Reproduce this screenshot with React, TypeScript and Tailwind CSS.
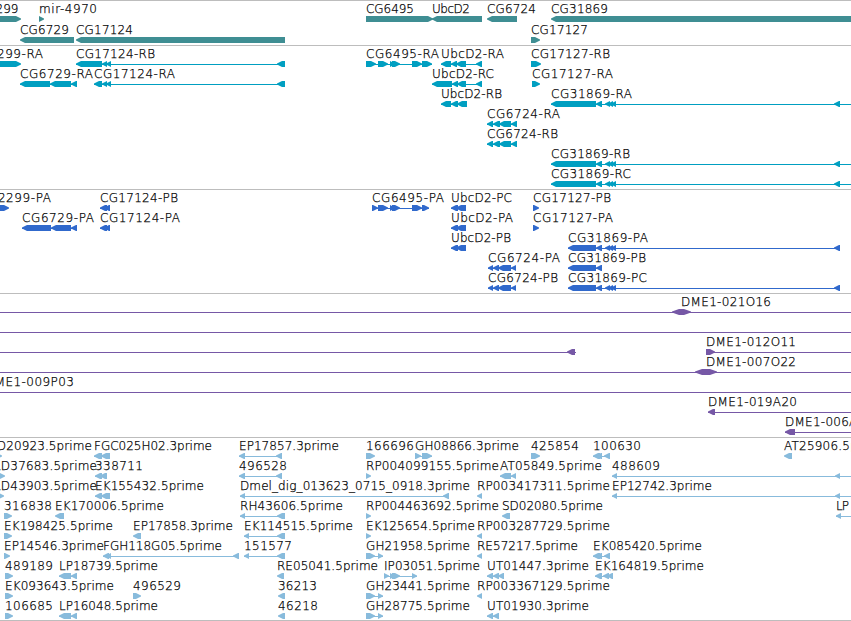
type Strand = '+' | '-' | '=';

// label, x of the label, x where the label ends, strand, exons, optional backbone range
type Feature = [string, number, number, Strand, number[][], number[]?];

interface Track {
  name: string;
  color: string;
  rowClass: string;
  padClass: string;
  rows: Feature[][];
}

const VIEW_END = 860;

const RB_17124 = [[102, 107], [106, 111], [277, 285]];
const TAIL_31869 = [[596, 602], [605, 610], [608, 613], [611, 616], [834, 840]];
const R_31869 = [[551, 596], ...TAIL_31869];
const P_31869 = [[568, 596], ...TAIL_31869];
const R_6724 = [[487, 493], [493, 500], [499, 511], [511, 517]];
const P_6724 = [[488, 493], [493, 499], [498, 511], [511, 516]];

const tracks: Track[] = [
  {
    name: 'Genes',
    color: '#3f8e93',
    rowClass: 'h-[21px]',
    padClass: 'pb-0.5',
    rows: [
      [
        ['CG2299', -30, 18.5, '+', [[-30, 21]]],
        ['mir-4970', 39, 97, '+', [[39, 44]]],
        ['CG6495', 366, 414, '+', [[366, 433]]],
        ['UbcD2', 432, 470, '-', [[432, 482]]],
        ['CG6724', 487, 536, '-', [[487, 517]]],
        ['CG31869', 551, 608, '-', [[551, VIEW_END]]],
      ],
      [
        ['CG6729', 20, 69, '-', [[20, 74]]],
        ['CG17124', 76, 133, '-', [[76, 285]]],
        ['CG17127', 531, 588, '+', [[531, 540]]],
      ],
    ],
  },
  {
    name: 'Transcripts',
    color: '#009fc1',
    rowClass: 'h-5',
    padClass: 'pb-[3px]',
    rows: [
      [
        ['CG2299-RA', -30, 43, '+', [[-30, 21]]],
        ['CG17124-RB', 76, 155, '-', [[76, 102], ...RB_17124]],
        ['CG6495-RA', 366, 439, '+', [[366, 376], [378, 388], [390, 395], [392, 400], [412, 422], [422, 432]]],
        ['UbcD2-RA', 441, 504, '-', [[441, 451], [451, 457], [456, 466], [476, 482]]],
        ['CG17127-RB', 531, 610, '+', [[531, 541]]],
      ],
      [
        ['CG6729-RA', 20, 93, '-', [[20, 50], [50, 71], [71, 77]]],
        ['CG17124-RA', 94, 175, '-', [[94, 102], ...RB_17124]],
        ['UbcD2-RC', 432, 494, '-', [[432, 452], [452, 458], [457, 466], [476, 482]]],
        ['CG17127-RA', 532, 613, '+', [[532, 540]]],
      ],
      [
        ['UbcD2-RB', 441, 502, '-', [[441, 451], [451, 458], [457, 467]]],
        ['CG31869-RA', 551, 632, '-', R_31869, [551, VIEW_END]],
      ],
      [['CG6724-RA', 487, 560, '-', R_6724]],
      [['CG6724-RB', 487, 558, '-', R_6724]],
      [['CG31869-RB', 551, 630, '-', R_31869, [551, VIEW_END]]],
      [['CG31869-RC', 551, 631, '-', R_31869, [551, VIEW_END]]],
    ],
  },
  {
    name: 'Proteins',
    color: '#3069cc',
    rowClass: 'h-5',
    padClass: 'pb-[3px]',
    rows: [
      [
        ['CG2299-PA', -21, 51, '+', [[-21, 9]]],
        ['CG17124-PB', 100, 178, '-', [[100, 107], [104, 110]]],
        ['CG6495-PA', 372, 444, '+', [[372, 378], [378, 388], [390, 395], [392, 400], [412, 422], [422, 429]]],
        ['UbcD2-PC', 451, 512, '-', [[451, 458], [456, 466]]],
        ['CG17127-PB', 533, 611, '+', [[533, 539]]],
      ],
      [
        ['CG6729-PA', 22, 94, '-', [[22, 51], [51, 71], [71, 77]]],
        ['CG17124-PA', 100, 180, '-', [[100, 107], [104, 110]]],
        ['UbcD2-PA', 451, 513, '-', [[451, 458], [456, 466]]],
        ['CG17127-PA', 533, 613, '+', [[533, 539]]],
      ],
      [
        ['UbcD2-PB', 451, 511, '-', [[451, 458], [456, 466]]],
        ['CG31869-PA', 568, 648, '-', P_31869],
      ],
      [
        ['CG6724-PA', 488, 560, '-', P_6724],
        ['CG31869-PB', 568, 646, '-', [[568, 596], [596, 602]]],
      ],
      [
        ['CG6724-PB', 488, 558, '-', P_6724],
        ['CG31869-PC', 568, 647, '-', P_31869],
      ],
    ],
  },
  {
    name: 'BAC clones',
    color: '#7658a6',
    rowClass: 'h-5',
    padClass: 'pb-[3px]',
    rows: [
      [['DME1-021O16', 681, 771, '=', [[672, 691]], [-5, VIEW_END]]],
      [['', 0, 0, '+', [], [-5, VIEW_END]]],
      [
        ['', 0, 0, '-', [[567, 575]], [-5, 576]],
        ['DME1-012O11', 706, 796, '+', [[706, 715]], [706, VIEW_END]],
      ],
      [['DME1-007O22', 706, 796, '=', [[695, 717]], [-5, VIEW_END]]],
      [['DME1-009P03', -15, 74, '+', [], [-5, VIEW_END]]],
      [['DME1-019A20', 708, 797, '-', [[708, 715]], [708, VIEW_END]]],
      [['DME1-006A14', 785, 873, '-', [[785, 795]], [785, VIEW_END]]],
    ],
  },
  {
    name: 'ESTs',
    color: '#88bbdc',
    rowClass: 'h-5',
    padClass: 'pb-0.5',
    rows: [
      [
        ['LD20923.5prime', -10, 92, '+', [[-6, 2]]],
        ['FGC025H02.3prime', 94, 212, '-', [[94, 102], [101, 110]]],
        ['EP17857.3prime', 239, 339, '-', [[239, 245], [276, 282]]],
        ['166696', 366, 414, '+', [[366, 375]]],
        ['GH08866.3prime', 415, 519, '+', [[415, 421], [422, 432]]],
        ['425854', 531, 579, '+', [[531, 540]]],
        ['100630', 593, 641, '-', [[593, 600], [596, 602], [604, 610]]],
        ['AT25906.5prime', 784, 886, '-', [[784, 792]]],
      ],
      [
        ['LD37683.5prime', -6, 97, '+', [[-6, 5]]],
        ['338711', 95, 143, '-', [[95, 102], [100, 107]]],
        ['496528', 239, 287, '-', [[239, 245], [276, 282]]],
        ['RP004099155.5prime', 366, 499, '+', [[366, 371]]],
        ['AT05849.5prime', 500, 602, '-', [[500, 511], [511, 516]]],
        ['488609', 612, 660, '-', [[612, 617], [835, 840]], [612, VIEW_END]],
      ],
      [
        ['LD43903.5prime', -6, 97, '+', [[-6, 4]]],
        ['EK155432.5prime', 95, 204, '-', [[95, 102], [101, 110]]],
        ['Dmel_dig_013623_0715_0918.3prime', 240, 470, '-', [[240, 245], [443, 449]]],
        ['RP003417311.5prime', 477, 610, '-', [[477, 482]]],
        ['EP12742.3prime', 612, 712, '-', [[612, 617], [835, 840]], [612, VIEW_END]],
      ],
      [
        ['316838', 4, 52, '+', [[4, 12]]],
        ['EK170006.5prime', 55, 164, '-', [[55, 64]]],
        ['RH43606.5prime', 240, 343, '-', [[240, 245], [277, 285]]],
        ['RP004463692.5prime', 366, 499, '+', [[366, 371]]],
        ['SD02080.5prime', 502, 603, '-', [[502, 510]]],
        ['LP', 836, 849, '-', [[836, 841]], [836, VIEW_END]],
      ],
      [
        ['EK198425.5prime', 4, 113, '+', [[4, 12]]],
        ['EP17858.3prime', 133, 233, '-', [[133, 141]]],
        ['EK114515.5prime', 244, 353, '-', [[244, 249], [277, 285]]],
        ['EK125654.5prime', 366, 475, '+', [[366, 371]]],
        ['RP003287729.5prime', 477, 610, '-', [[477, 482]]],
      ],
      [
        ['EP14546.3prime', 4, 104, '+', [[4, 10]]],
        ['FGH118G05.5prime', 103, 222, '-', [[103, 109], [106, 111], [233, 239]]],
        ['151577', 244, 292, '-', [[244, 249], [277, 285]]],
        ['GH21958.5prime', 366, 470, '+', [[366, 375], [378, 383]]],
        ['RE57217.5prime', 477, 578, '-', [[477, 482]]],
        ['EK085420.5prime', 593, 702, '-', [[593, 600], [596, 602], [604, 610]]],
      ],
      [
        ['489189', 5, 53, '+', [[5, 13]]],
        ['LP18739.5prime', 59, 158, '-', [[59, 71], [71, 77]]],
        ['RE05041.5prime', 277, 378, '-', [[277, 284]]],
        ['IP03051.5prime', 384, 480, '+', [[384, 389], [390, 395], [392, 400], [412, 417]]],
        ['UT01447.3prime', 487, 589, '-', [[487, 493], [493, 499], [498, 504]]],
        ['EK164819.5prime', 595, 704, '-', [[595, 602], [603, 609], [607, 613]]],
      ],
      [
        ['EK093643.5prime', 5, 114, '+', [[5, 13]]],
        ['496529', 133, 181, '+', [[133, 141]]],
        ['36213', 278, 317, '-', [[278, 285]]],
        ['GH23441.5prime', 366, 470, '+', [[366, 375], [378, 383]]],
        ['RP003367129.5prime', 477, 610, '-', [[477, 482]]],
      ],
      [
        ['106685', 5, 53, '+', [[5, 13]]],
        ['LP16048.5prime', 59, 158, '-', [[59, 71], [71, 77]]],
        ['46218', 278, 318, '-', [[278, 285]]],
        ['GH28775.5prime', 366, 470, '+', [[366, 375], [378, 383]]],
        ['UT01930.3prime', 487, 589, '-', [[487, 493], [493, 499]]],
      ],
    ],
  },
];

function exonPoints(start: number, end: number, strand: Strand) {
  const tip = Math.min(5, end - start);
  if (strand === '=') {
    return `${start},17.5 ${start + 7},15 ${end - 7},15 ${end},17.5 ${end},18.5 ${end - 7},21 ${start + 7},21 ${start},18.5`;
  }
  if (strand === '+') {
    return `${start},15 ${end - tip},15 ${end},17.5 ${end},18.5 ${end - tip},21 ${start},21`;
  }
  return `${end},15 ${start + tip},15 ${start},17.5 ${start},18.5 ${start + tip},21 ${end},21`;
}

function FeatureGlyph({ feature }: { feature: Feature }) {
  const [label, x, labelEnd, strand, exons, range] = feature;
  const from = range ? range[0] : exons[0][0];
  const to = range ? range[1] : exons[exons.length - 1][1];

  return (
    <g>
      {(range || exons.length > 1) && (
        <rect x={from} y={18} width={to - from} height={1} shapeRendering="crispEdges" />
      )}
      {exons.map(([start, end]) => (
        <polygon key={start} points={exonPoints(start, end, strand)} />
      ))}
      {label && (
        <text
          x={x}
          y={12}
          textLength={labelEnd - x}
          className="fill-black stroke-black font-extralight [stroke-width:0.25px]"
        >
          {label}
        </text>
      )}
    </g>
  );
}

function TrackPanel({ track }: { track: Track }) {
  return (
    <section aria-label={track.name} className={`border-t border-[#bdbdbd] ${track.padClass}`}>
      {track.rows.map((row, i) => (
        <div key={i} className={track.rowClass}>
          <svg width="851" height="20" fill={track.color} className="block overflow-visible">
            {row.map((feature, j) => (
              <FeatureGlyph key={j} feature={feature} />
            ))}
          </svg>
        </div>
      ))}
    </section>
  );
}

export default function App() {
  return (
    <main className="h-[621px] w-[851px] overflow-hidden border-b border-[#bdbdbd] bg-white font-['DejaVu_Sans',sans-serif] text-[12px]">
      {tracks.map((track) => (
        <TrackPanel key={track.name} track={track} />
      ))}
    </main>
  );
}
